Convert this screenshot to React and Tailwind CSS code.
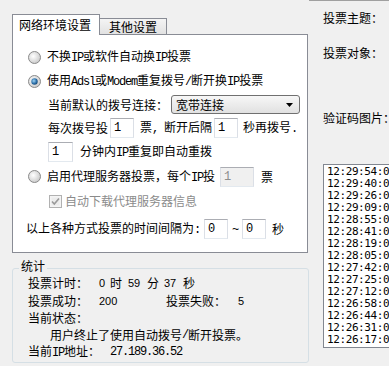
import React from 'react';

const A = ({ children }) => (
  <span className="font-['Liberation_Mono',monospace] text-[12px] tracking-[-1.2px]">{children}</span>
);

const Radio = ({ checked }) => (
  <svg width="13" height="13" viewBox="0 0 13 13" className="shrink-0">
    <defs>
      <radialGradient id={checked ? 'rOn' : 'rOff'} cx="0.4" cy="0.4" r="0.7">
        <stop offset="0" stopColor="#ffffff" />
        <stop offset="1" stopColor="#c4c4c4" />
      </radialGradient>
      <radialGradient id="dot" cx="0.4" cy="0.4" r="0.7">
        <stop offset="0" stopColor="#9fd4f5" />
        <stop offset="0.6" stopColor="#2c6fa8" />
        <stop offset="1" stopColor="#123e66" />
      </radialGradient>
    </defs>
    <circle cx="6.5" cy="6.5" r="6" fill={`url(#${checked ? 'rOn' : 'rOff'})`} stroke="#8a8a8a" />
    {checked && <circle cx="6.5" cy="6.5" r="3.2" fill="url(#dot)" />}
  </svg>
);

const Check = () => (
  <svg width="13" height="13" viewBox="0 0 13 13" className="shrink-0">
    <rect x="0.5" y="0.5" width="12" height="12" fill="#f4f4f4" stroke="#b1b1b1" />
    <rect x="2.5" y="2.5" width="8" height="8" fill="#ececec" />
    <path d="M3 6.5 L5.3 9 L10 3.5" fill="none" stroke="#9a9a9a" strokeWidth="1.6" />
  </svg>
);

const Box = ({ w, value, disabled }) => (
  <div
    className={`h-[20px] ${w} border border-[#abadb3] border-b-[#e3e9ef] border-x-[#dbdfe6] flex items-center pl-[3px] font-['Liberation_Mono',monospace] text-[12px] tracking-[-1.2px] ${disabled ? 'bg-[#f0f0f0] text-[#8d8d8d]' : 'bg-white'}`}
  >
    {value}
  </div>
);

const Num = ({ w, children }) => (
  <span className={`${w} shrink-0 font-['Liberation_Sans',sans-serif] text-[11px]`}>{children}</span>
);

const logs = [
  '12:29:54:0', '12:29:40:0', '12:29:26:0', '12:29:09:0', '12:28:55:0', '12:28:41:0', '12:28:19:0',
  '12:28:05:0', '12:27:42:0', '12:27:25:0', '12:27:12:0', '12:26:58:0', '12:26:44:0', '12:26:31:0',
  '12:26:17:0',
];

export default function App() {
  return (
    <div className="w-[389px] h-[366px] overflow-hidden bg-[#f0f0f0] flex text-[12px] leading-[14px] text-black font-['Noto_Sans_CJK_SC',sans-serif]">
      {/* left column */}
      <div className="w-[309px] shrink-0 pl-[12px] pt-[14px]">
        <div className="flex items-end h-[20px]">
          <div className="relative z-[1] -mb-px h-[21px] w-[88px] bg-white border border-b-0 border-[#898c95] pl-[6px] flex items-center">
            网络环境设置
          </div>
          <div className="h-[16px] w-[67px] border border-l-0 border-b-0 border-[#898c95] bg-gradient-to-b from-[#f4f4f4] to-[#e2e2e2] pl-[9px] flex items-center">
            其他设置
          </div>
        </div>

        <div className="w-[296px] h-[219px] bg-white border border-[#898c95] pt-[10px]">
          <div className="h-[24px] flex items-center pl-[15px] gap-[6px]">
            <Radio />
            <span>不换<A>IP</A>或软件自动换<A>IP</A>投票</span>
          </div>
          <div className="h-[24px] flex items-center pl-[15px] gap-[6px]">
            <Radio checked />
            <span>使用<A>Adsl</A>或<A>Modem</A>重复拨号<A>/</A>断开换<A>IP</A>投票</span>
          </div>
          <div className="h-[23px] flex items-center pl-[35px]">
            <span>当前默认的拨号连接：</span>
            <div className="ml-[3px] w-[129px] h-[19px] rounded-[3px] border border-[#707070] bg-gradient-to-b from-[#f7f7f7] to-[#e1e1e1] flex items-center justify-between pl-[4px] pr-[6px]">
              <span>宽带连接</span>
              <svg width="7" height="4" viewBox="0 0 7 4"><path d="M0 0 H7 L3.5 4 Z" fill="#000" /></svg>
            </div>
          </div>
          <div className="h-[24px] flex items-center pl-[35px]">
            <span>每次拨号投</span>
            <div className="ml-[2px]"><Box w="w-[24px]" value="1" /></div>
            <span className="ml-[6px]">票<A>, </A>断开后隔</span>
            <div className="ml-[2px]"><Box w="w-[24px]" value="1" /></div>
            <span className="ml-[5px]">秒再拨号<A>.</A></span>
          </div>
          <div className="h-[24px] flex items-center pl-[35px]">
            <Box w="w-[25px]" value="1" />
            <span className="ml-[7px]">分钟内<A>IP</A>重复即自动重拨</span>
          </div>
          <div className="h-[25px] flex items-center pl-[15px]">
            <Radio />
            <span className="ml-[6px]">启用代理服务器投票，每个<A>IP</A>投</span>
            <div className="ml-[5px]"><Box w="w-[34px]" value="1" disabled /></div>
            <span className="ml-[7px]">票</span>
          </div>
          <div className="h-[24px] flex items-center pl-[36px] gap-[3px] text-[#8b8b8b]">
            <Check />
            <span>自动下载代理服务器信息</span>
          </div>
          <div className="mt-[4px] h-[24px] flex items-center pl-[13px]">
            <span>以上各种方式投票的时间间隔为<A>:</A></span>
            <div className="ml-[4px]"><Box w="w-[24px]" value="0" /></div>
            <span className="ml-[4px]"><A>~</A></span>
            <div className="ml-[4px]"><Box w="w-[24px]" value="0" /></div>
            <span className="ml-[6px]">秒</span>
          </div>
        </div>

        <div className="mt-[15px] w-[297px] h-[95px] border border-[#d5dfe5] rounded-[3px]">
          <div className="-mt-[10px] ml-[6px] w-fit px-[2px] bg-[#f0f0f0] h-[14px]">统计</div>
          <div className="pl-[15px] pt-px">
            <div className="h-[18px] flex items-center">
              <span className="w-[71px] shrink-0">投票计时：</span>
              <Num w="w-[11px]">0</Num>
              <span className="w-[18px] shrink-0">时</span>
              <Num w="w-[19px]">59</Num>
              <span className="w-[17px] shrink-0">分</span>
              <Num w="w-[19px]">37</Num>
              <span>秒</span>
            </div>
            <div className="h-[17px] flex items-center">
              <span className="w-[71px] shrink-0">投票成功：</span>
              <Num w="w-[67px]">200</Num>
              <span className="w-[72px] shrink-0">投票失败：</span>
              <Num w="">5</Num>
            </div>
            <div className="h-[17px] flex items-center">当前状态：</div>
            <div className="h-[17px] flex items-center pl-[22px]">
              用户终止了使用自动拨号<A>/</A>断开投票。
            </div>
            <div className="h-[18px] flex items-center">
              <span className="w-[82px]">当前<A>IP</A>地址：</span>
              <A>27.189.36.52</A>
            </div>
          </div>
        </div>
      </div>

      {/* right column */}
      <div className="flex-1 min-w-0 border-t border-[#a0a0a0] pl-[14px] pt-[10px] whitespace-nowrap">
        <div className="h-[14px]">投票主题：</div>
        <div className="mt-[21px] h-[14px]">投票对象：</div>
        <div className="mt-[51px] h-[14px]">验证码图片：</div>
        <div className="mt-[39px] w-[80px] h-[184px] bg-white border border-r-0 border-[#828790] pl-[3px] pt-[1px] font-['DejaVu_Sans_Mono',monospace] text-[11px] tracking-[-0.4px] leading-[12px]">
          {logs.map((t) => (
            <div key={t}>{t}</div>
          ))}
        </div>
      </div>
    </div>
  );
}
